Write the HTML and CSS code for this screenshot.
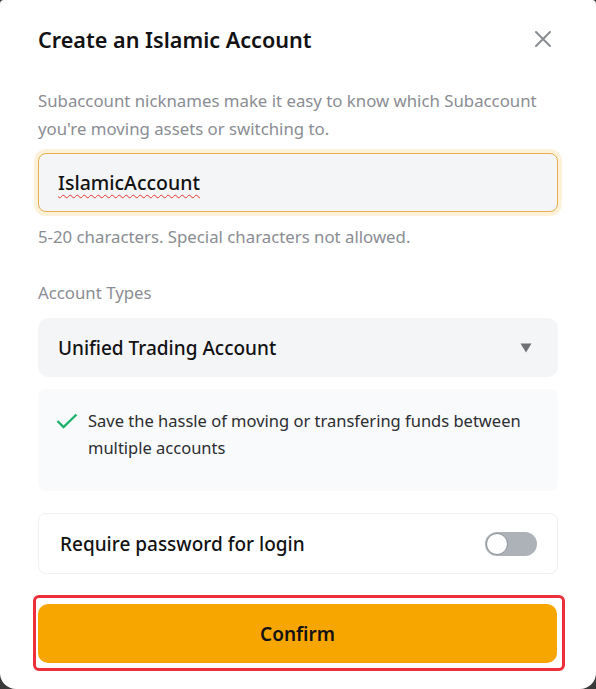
FILE: index.html
```html
<!DOCTYPE html>
<html lang="en">
<head>
<meta charset="utf-8">
<link rel="stylesheet" href="styles.css">
</head>
<body>
<div class="modal">
  <div class="header">
    <h1 class="title">Create an Islamic Account</h1>
    <svg class="close" width="18" height="18" viewBox="0 0 18 18"><path d="M2 2L16 16M16 2L2 16" stroke="#8a8d93" stroke-width="2" fill="none" stroke-linecap="round"/></svg>
  </div>
  <p class="desc">Subaccount nicknames make it easy to know which Subaccount you're moving assets or switching to.</p>
  <div class="input"><span class="input-text">IslamicAccount</span></div>
  <p class="hint">5-20 characters. Special characters not allowed.</p>
  <p class="label">Account Types</p>
  <div class="select">
    <span>Unified Trading Account</span>
    <svg class="caret" width="12" height="10" viewBox="0 0 12 10"><path d="M0.5 0.5H11.5L6 9.5Z" fill="#6f7176"/></svg>
  </div>
  <div class="info">
    <svg class="check" width="22" height="16" viewBox="0 0 22 16"><path d="M1.5 8L7.5 14L20.5 1.5" stroke="#20b26c" stroke-width="2.4" fill="none"/></svg>
    <span>Save the hassle of moving or transfering funds between multiple accounts</span>
  </div>
  <div class="row">
    <span>Require password for login</span>
    <span class="toggle"><span class="knob"></span></span>
  </div>
  <div class="highlight">
    <button class="confirm">Confirm</button>
  </div>
</div>
</body>
</html>
```
FILE: styles.css
```css
html, body {
  margin: 0;
  padding: 0;
  background: #3a3a3a;
}
.modal {
  width: 596px;
  height: 689px;
  box-sizing: border-box;
  background: #fff;
  border-radius: 4px 4px 16px 16px;
  padding: 24px 38px 0 38px;
  font-family: "Noto Sans", sans-serif;
  color: #121214;
}
.header {
  display: flex;
  justify-content: space-between;
  align-items: center;
  height: 30px;
}
.title {
  margin: 0;
  font-size: 21.6px;
  font-weight: 600;
  color: #121214;
}
.close {
  margin-right: 6px;
}
.desc {
  margin: 33px 0 0 0;
  font-size: 16.8px;
  line-height: 28px;
  color: #8a8d93;
}
.input {
  margin-top: 10px;
  height: 59px;
  box-sizing: border-box;
  border: 1px solid #e7ad4f;
  border-radius: 8px;
  background: #f4f5f7;
  box-shadow: 0 0 0 4px #fdf1d9;
  display: flex;
  align-items: center;
  padding-left: 19px;
}
.input-text {
  font-size: 19.5px;
  font-weight: 500;
  text-decoration: underline wavy #e5342e;
  text-decoration-thickness: 1px;
  text-underline-offset: 4px;
}
.hint {
  margin: 13px 0 0 0;
  font-size: 16.8px;
  line-height: 24px;
  color: #8a8d93;
}
.label {
  margin: 32px 0 0 0;
  font-size: 16.8px;
  line-height: 24px;
  color: #8a8d93;
}
.select {
  margin-top: 13px;
  height: 59px;
  border-radius: 10px;
  background: #f4f5f7;
  display: flex;
  align-items: center;
  justify-content: space-between;
  padding: 0 26px 0 20px;
  font-size: 19px;
  font-weight: 500;
}
.info {
  margin-top: 12px;
  height: 102px;
  box-sizing: border-box;
  border-radius: 8px;
  background: #f9fafb;
  padding: 18px 20px 0 18px;
  display: flex;
  align-items: flex-start;
  font-size: 16.5px;
  line-height: 27px;
  color: #2b2d31;
}
.check {
  flex: none;
  margin: 6px 10px 0 0;
}
.row {
  margin-top: 22px;
  height: 61px;
  box-sizing: border-box;
  border: 1px solid #eef0f2;
  border-radius: 8px;
  display: flex;
  align-items: center;
  justify-content: space-between;
  padding: 0 20px 0 21px;
  font-size: 19px;
  font-weight: 500;
}
.toggle {
  width: 52px;
  height: 24px;
  border-radius: 12px;
  background: #adb1b8;
  position: relative;
}
.knob {
  position: absolute;
  left: 1px;
  top: 1px;
  width: 22px;
  height: 22px;
  border-radius: 50%;
  background: #fff;
  border: 1px solid #8f939a;
  box-sizing: border-box;
}
.highlight {
  margin: 21px -7px 0 -5px;
  border: 3px solid #ec2f3a;
  border-radius: 6px;
  padding: 6px 5px 5px 2px;
}
.confirm {
  display: block;
  width: 100%;
  height: 59px;
  border: none;
  border-radius: 10px;
  background: #f7a600;
  font-family: "Noto Sans", sans-serif;
  font-size: 19px;
  font-weight: 600;
  color: #121214;
}
```
